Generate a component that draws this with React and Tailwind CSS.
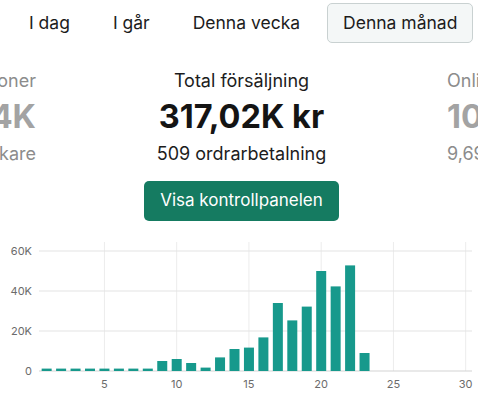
import React from "react";

const tabs = ["I dag", "I går", "Denna vecka", "Denna månad"];

// försäljning per dag i tusental kr
const sales = [
  1.2, 1.2, 1.2, 1.2, 1.2, 1.2, 1.2, 1.2, 5, 6, 4, 1.7, 6.8, 11, 11.7, 16.8,
  34, 25.3, 32.2, 50, 42.3, 52.8, 9, 0, 0, 0, 0, 0, 0, 0,
];

const xOf = (d) => 32.2 + d * 14.45;
const yOf = (k) => 137 - k * 2; // svg-lokala y, 0 vid 137

const SalesChart = () => {
  return (
    <svg width="478" height="166" viewBox="0 0 478 166" className="block">
      {[5, 10, 15, 20, 25, 30].map((d) => (
        <line key={d} x1={xOf(d)} x2={xOf(d)} y1="8" y2="137" stroke="#ececec" strokeWidth="1" />
      ))}
      {[0, 20, 40, 60].map((k) => (
        <g key={k}>
          <line x1="39" x2="472" y1={yOf(k)} y2={yOf(k)} stroke={k === 0 ? "#d4d4d4" : "#e4e4e4"} strokeWidth="1.2" />
          <text x="32" y={yOf(k) + 4} textAnchor="end" fontSize="11" fill="#6b6b6b" fontFamily="Inter, sans-serif">
            {k === 0 ? "0" : `${k}K`}
          </text>
        </g>
      ))}
      {sales.map((k, i) =>
        k > 0 ? (
          <rect key={i} x={xOf(i + 1) - 5} y={yOf(k)} width="10" height={k * 2} fill="#17998c" />
        ) : null
      )}
      {[5, 10, 15, 20, 25, 30].map((d) => (
        <text key={d} x={xOf(d)} y="154" textAnchor="middle" fontSize="11" fill="#6b6b6b" fontFamily="Inter, sans-serif">
          {d}
        </text>
      ))}
    </svg>
  );
};

const App = () => {
  return (
    <div className="w-[478px] h-[401px] overflow-hidden bg-white font-['Inter',sans-serif]">
      <div className="flex items-center gap-[11px] pl-[13px] pt-[3px]">
        {tabs.map((t, i) => (
          <button
            key={t}
            className={
              "h-[40px] px-[15px] text-[17.5px] text-[#1c1c1c] rounded-[5px] border whitespace-nowrap " +
              (i === 3 ? "bg-[#f4f7f7] border-[#c9d1d1]" : "border-transparent")
            }
          >
            {t}
          </button>
        ))}
      </div>

      <div className="flex mt-[26px] overflow-hidden">
        <div className="w-[36px] shrink-0 flex flex-col items-end text-[#8c8c8c] whitespace-nowrap">
          <div className="text-[18px] leading-[24px]">Sessioner</div>
          <div className="text-[32.5px] leading-[38px] mt-[5px] font-bold text-[#a3a3a3]">12,4K</div>
          <div className="text-[18px] leading-[24px] mt-[6px]">8 203 besökare</div>
        </div>

        <div className="flex-1 flex flex-col items-center">
          <div className="text-[18px] leading-[24px] text-[#1c1c1c]">Total försäljning</div>
          <div className="text-[32.5px] leading-[38px] mt-[5px] font-bold text-[#141414]">317,02K kr</div>
          <div className="text-[18px] leading-[24px] mt-[6px] text-[#1c1c1c]">509 ordrarbetalning</div>
          <button className="mt-[15px] h-[40px] px-[16px] rounded-[5px] bg-[#157b61] text-white text-[17px]">
            Visa kontrollpanelen
          </button>
        </div>

        <div className="w-[31px] shrink-0 flex flex-col items-start text-[#8c8c8c] whitespace-nowrap">
          <div className="text-[18px] leading-[24px]">Onlinebutik</div>
          <div className="text-[32.5px] leading-[38px] mt-[5px] font-bold text-[#a3a3a3]">10,5K</div>
          <div className="text-[18px] leading-[24px] mt-[6px]">9,69 % konvertering</div>
        </div>
      </div>

      <div className="mt-[13px]">
        <SalesChart />
      </div>
    </div>
  );
};

export default App;
